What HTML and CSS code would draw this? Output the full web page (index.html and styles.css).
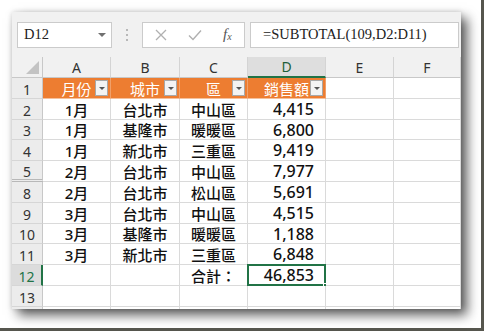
FILE: index.html
```html
<!DOCTYPE html>
<html>
<head>
<meta charset="utf-8">
<link rel="stylesheet" href="styles.css">
</head>
<body>
<div class="frame">
  <div class="sheet">
    <div class="fbar">
      <div class="namebox"><span>D12</span><span class="dd"></span></div>
      <div class="sep"><i></i><i></i><i></i></div>
      <div class="cbox">
        <svg class="ic-x" width="12" height="12" viewBox="0 0 12 12"><path d="M1 1L11 11M11 1L1 11" stroke="#b0b0b0" stroke-width="1.3" fill="none"/></svg>
        <svg class="ic-ok" width="14" height="12" viewBox="0 0 14 12"><path d="M1 6.5L5 10.5L13 1.5" stroke="#b0b0b0" stroke-width="1.4" fill="none"/></svg>
        <span class="fx"><i>f</i><sub>x</sub></span>
      </div>
      <div class="formula">=SUBTOTAL(109,D2:D11)</div>
    </div>
    <div class="grid">
      <div class="corner"><span class="tri"></span></div>
      <div class="ch">A</div><div class="ch">B</div><div class="ch">C</div><div class="ch sel">D</div><div class="ch">E</div><div class="ch">F</div>

      <div class="rh">1</div>
      <div class="c o">月份<span class="fb"></span></div>
      <div class="c o">城市<span class="fb"></span></div>
      <div class="c o">區<span class="fb"></span></div>
      <div class="c o">銷售額<span class="fb"></span></div>
      <div class="c"></div><div class="c"></div>

      <div class="rh">2</div><div class="c">1月</div><div class="c">台北市</div><div class="c">中山區</div><div class="c num">4,415</div><div class="c"></div><div class="c"></div>
      <div class="rh">3</div><div class="c">1月</div><div class="c">基隆市</div><div class="c">暖暖區</div><div class="c num">6,800</div><div class="c"></div><div class="c"></div>
      <div class="rh">4</div><div class="c">1月</div><div class="c">新北市</div><div class="c">三重區</div><div class="c num">9,419</div><div class="c"></div><div class="c"></div>
      <div class="rh hid">5</div><div class="c">2月</div><div class="c">台北市</div><div class="c">中山區</div><div class="c num">7,977</div><div class="c"></div><div class="c"></div>
      <div class="rh">8</div><div class="c">2月</div><div class="c">台北市</div><div class="c">松山區</div><div class="c num">5,691</div><div class="c"></div><div class="c"></div>
      <div class="rh">9</div><div class="c">3月</div><div class="c">台北市</div><div class="c">中山區</div><div class="c num">4,515</div><div class="c"></div><div class="c"></div>
      <div class="rh">10</div><div class="c">3月</div><div class="c">基隆市</div><div class="c">暖暖區</div><div class="c num">1,188</div><div class="c"></div><div class="c"></div>
      <div class="rh">11</div><div class="c">3月</div><div class="c">新北市</div><div class="c">三重區</div><div class="c num">6,848</div><div class="c"></div><div class="c"></div>
      <div class="rh rsel">12</div><div class="c"></div><div class="c"></div><div class="c">合計：</div><div class="c num active">46,853<span class="handle"></span></div><div class="c"></div><div class="c"></div>
      <div class="rh">13</div><div class="c"></div><div class="c"></div><div class="c"></div><div class="c"></div><div class="c"></div><div class="c"></div>
      <div class="rh"></div><div class="c"></div><div class="c"></div><div class="c"></div><div class="c"></div><div class="c"></div><div class="c"></div>
    </div>
  </div>
</div>
</body>
</html>
```

FILE: styles.css
```css
* { box-sizing: border-box; margin: 0; padding: 0; }
html, body { background: #fff; }
body { width: 484px; height: 332px; overflow: hidden; }

.frame {
  width: 484px;
  height: 331px;
  border-right: 3px solid #56564e;
  border-bottom: 3px solid #56564e;
  padding: 12px 0 0 12px;
  background: #fff;
}
.sheet {
  width: 449px;
  height: 297px;
  overflow: hidden;
  background: #fff;
  box-shadow: 6px 6px 11px rgba(0,0,0,0.65), 0 0 5px rgba(0,0,0,0.15);
}

/* formula bar */
.fbar {
  height: 45px;
  background: #f1f1f1;
  display: flex;
  align-items: center;
  padding-left: 5px;
}
.namebox {
  width: 95px;
  height: 26px;
  background: #fff;
  border: 1px solid #cbcbcb;
  display: flex;
  align-items: center;
  justify-content: space-between;
  padding: 0 5px 0 6px;
  font: 14.5px "Liberation Serif", serif;
  color: #222;
}
.dd {
  width: 0; height: 0;
  border-left: 4px solid transparent;
  border-right: 4px solid transparent;
  border-top: 4px solid #707070;
}
.sep {
  width: 30px;
  display: flex;
  flex-direction: column;
  align-items: center;
  gap: 3px;
}
.sep i { display: block; width: 2px; height: 2px; background: #b8b8b8; }
.cbox {
  width: 103px;
  height: 26px;
  background: #fff;
  border: 1px solid #cbcbcb;
  display: flex;
  align-items: center;
  padding-left: 12px;
}
.ic-ok { margin-left: 21px; }
.fx {
  margin-left: 21px;
  font: italic 15px "Liberation Serif", serif;
  color: #555;
  line-height: 1;
}
.fx sub { font-size: 10px; vertical-align: -1px; }
.formula {
  margin-left: 5px;
  margin-right: 2px;
  flex: 1;
  height: 26px;
  background: #fff;
  border: 1px solid #cbcbcb;
  display: flex;
  align-items: center;
  padding-left: 12px;
  font: 14.5px "Liberation Serif", serif;
  color: #222;
}

/* grid */
.grid {
  display: grid;
  grid-template-columns: 31px 68px 69px 68px 78px 68px 67px;
  grid-template-rows: 21px 21px 21px 20px 21px 21px 21px 21px 20px 21px 21px 21px 21px;
  font-family: "Noto Sans", "Noto Sans CJK TC", sans-serif;
}
.grid > div {
  display: flex;
  align-items: center;
  justify-content: center;
  position: relative;
}
.corner {
  background: #f1f1f1;
  border-right: 1px solid #c8c8c8;
  border-bottom: 1px solid #c8c8c8;
}
.tri {
  position: absolute;
  right: 3px;
  bottom: 3px;
  width: 0; height: 0;
  border-left: 13px solid transparent;
  border-bottom: 13px solid #c3c3c3;
}
.ch {
  background: #f1f1f1;
  border-right: 1px solid #d4d4d4;
  border-bottom: 1px solid #c8c8c8;
  font-size: 14px;
  color: #333;
}
.ch.sel {
  background: #dedede;
  border-bottom: 2px solid #217346;
  color: #1e5e3a;
}
.rh {
  background: #ececec;
  border-right: 1px solid #c8c8c8;
  border-bottom: 1px solid #d6d6d6;
  font-size: 14px;
  color: #333;
  padding-top: 2px;
}
.rh.hid { border-bottom: 3px double #b8b8b8; }
.rh.rsel {
  background: #dcdcdc;
  border-right: 2px solid #217346;
  color: #217346;
}
.c {
  background: #fff;
  border-right: 1px solid #dadada;
  border-bottom: 1px solid #dadada;
  font-size: 15px;
  font-weight: 500;
  color: #111;
}
.c.num { justify-content: flex-end; padding-right: 11px; font-size: 16px; }
.c.o {
  background: #ed7d31;
  color: #fff;
  font-weight: 400;
  border-right: 1px solid #f0a06a;
  border-bottom: 1px solid #f4c09c;
}
.fb {
  position: absolute;
  right: 2px;
  top: 2px;
  width: 13px;
  height: 16px;
  background: #f3f3f3;
  border: 1px solid #a8a8a8;
}
.fb::after {
  content: "";
  position: absolute;
  left: 3px;
  top: 6px;
  border-left: 3px solid transparent;
  border-right: 3px solid transparent;
  border-top: 3px solid #555;
}
.active::before {
  content: "";
  position: absolute;
  left: -1px;
  top: -1px;
  right: -1px;
  bottom: -1px;
  border: 2px solid #217346;
}
.handle {
  position: absolute;
  right: -4px;
  bottom: -4px;
  width: 6px;
  height: 6px;
  background: #217346;
  border: 1px solid #fff;
}
```
